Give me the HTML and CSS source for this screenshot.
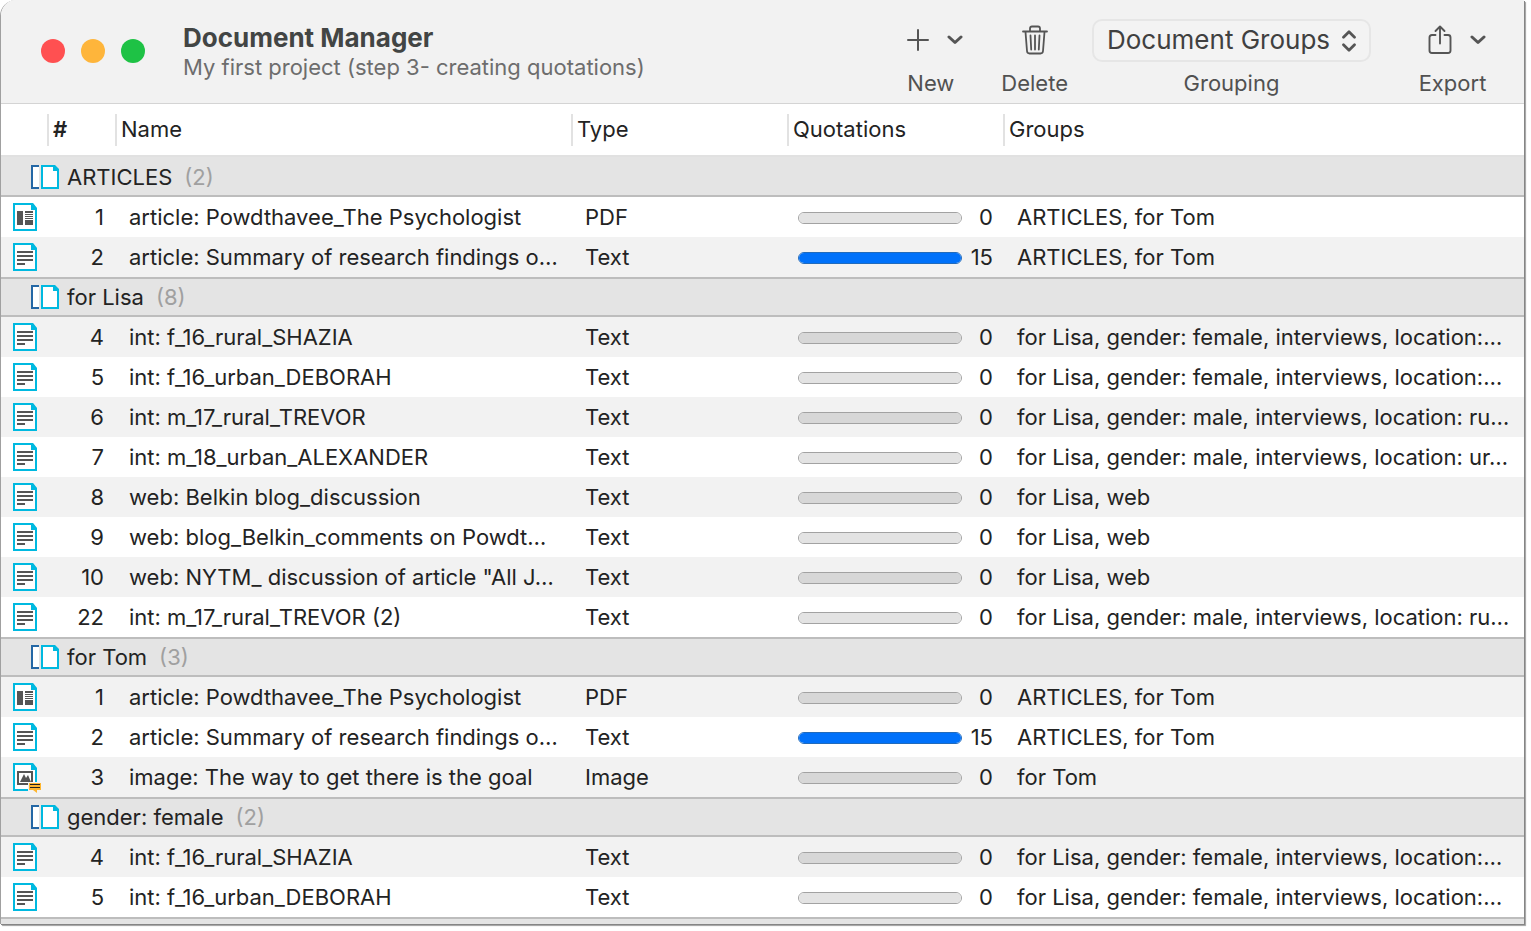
FILE: index.html
```html
<!DOCTYPE html>
<html lang="en">
<head>
<meta charset="utf-8">
<title>Document Manager</title>
<link rel="stylesheet" href="styles.css">
</head>
<body>
<svg class="sprite" aria-hidden="true">
  <symbol id="page" viewBox="0 0 28 28">
    <path d="M1 1H19L23 6V27H1Z" fill="#fff" stroke="#00b9e0" stroke-width="2"/>
    <path d="M18 0H20L24 5V7H18Z" fill="#00b9e0"/>
  </symbol>
  <symbol id="text-doc" viewBox="0 0 28 28">
    <use href="#page" width="28" height="28"/>
    <path d="M4 9H20M4 13H20M4 17H20M4 21H12" stroke="#555" stroke-width="2"/>
  </symbol>
  <symbol id="pdf-doc" viewBox="0 0 28 28">
    <use href="#page" width="28" height="28"/>
    <path d="M4 8H10V22H4ZM12 8H20V10H12ZM12 11H20V12H12ZM12 13H20V14H12ZM12 15H20V16H12ZM12 17H20V22H12Z" fill="#555"/>
  </symbol>
  <symbol id="image-doc" viewBox="0 0 28 28">
    <use href="#page" width="28" height="28"/>
    <path d="M5 9H19V21H5Z" fill="#fff" stroke="#555" stroke-width="2"/>
    <path d="M7 19L11 11L13 15L15 12L18 19Z" fill="#555"/>
    <path d="M15 19H28V28H15Z" fill="#f2f2f2"/>
    <path d="M16 20H28V27H24V30L20 27H16Z" fill="#ffb62e"/>
    <path d="M17 21.500H27M17 24.500H27" stroke="#222" stroke-width="1"/>
  </symbol>
  <symbol id="group" viewBox="0 0 28 24">
    <path d="M2 2H8V22H2Z" fill="#fff"/>
    <path d="M8 1H1V23H8" fill="none" stroke="#2367a5" stroke-width="2"/>
    <path d="M11 1H23L27 6V23H11Z" fill="#fff" stroke="#00b9e0" stroke-width="2"/>
    <path d="M22 0H24L28 4V6H22Z" fill="#00b9e0"/>
  </symbol>
  <symbol id="chevron" viewBox="0 0 16 10">
    <path d="M2 2L8 7.500L14 2" fill="none" stroke="#555" stroke-width="3" stroke-linecap="round" stroke-linejoin="round"/>
  </symbol>
</svg>
<main class="window">
  <header class="titlebar">
    <div class="lights">
      <button class="light close" aria-label="Close"></button>
      <button class="light minimize" aria-label="Minimize"></button>
      <button class="light zoom" aria-label="Zoom"></button>
    </div>
    <div class="titles">
      <h1>Document Manager</h1>
      <p>My first project (step 3- creating quotations)</p>
    </div>
    <div class="toolbar">
      <button class="tool tool-new">
        <span class="glyphs">
          <svg class="plus" viewBox="0 0 22 22"><path d="M11 1V21M1 11H21" fill="none" stroke="#555" stroke-width="2" stroke-linecap="round"/></svg>
          <svg class="chevron"><use href="#chevron"/></svg>
        </span>
        <span>New</span>
      </button>
      <button class="tool tool-delete">
        <span class="glyphs">
          <svg class="trash" viewBox="0 0 26 30"><path d="M1 6.500H25M8 6V3.500Q8 1.500 10 1.500H16Q18 1.500 18 3.500V6M3.500 7L5 26Q5.200 28.500 7.500 28.500H18.500Q20.800 28.500 21 26L22.500 7M8.500 10.500L9.200 24.500M13 10.500V24.500M17.500 10.500L16.800 24.500" fill="none" stroke="#555" stroke-width="1.800" stroke-linecap="round"/></svg>
        </span>
        <span>Delete</span>
      </button>
      <div class="tool tool-grouping">
        <span class="picker">
          <select id="grouping"><option>Document Groups</option></select>
          <svg class="updown" viewBox="0 0 16 24"><path d="M2 8L8 2L14 8M2 16L8 22L14 16" fill="none" stroke="#555" stroke-width="3" stroke-linecap="round" stroke-linejoin="round"/></svg>
        </span>
        <label for="grouping">Grouping</label>
      </div>
      <button class="tool tool-export">
        <span class="glyphs">
          <svg class="share" viewBox="0 0 24 30"><path d="M7.500 10H4Q1.500 10 1.500 12.500V25.500Q1.500 28 4 28H20Q22.500 28 22.500 25.500V12.500Q22.500 10 20 10H16.500M12 18.500V2M7.500 6L12 1.500L16.500 6" fill="none" stroke="#555" stroke-width="1.900" stroke-linecap="round" stroke-linejoin="round"/></svg>
          <svg class="chevron"><use href="#chevron"/></svg>
        </span>
        <span>Export</span>
      </button>
    </div>
  </header>
  <table class="documents">
    <colgroup><col class="col-icon"><col class="col-number"><col class="col-name"><col class="col-type"><col class="col-quotations"><col></colgroup>
    <thead>
      <tr><td></td><th scope="col"><span class="sorted">#</span></th><th scope="col"><span>Name</span></th><th scope="col"><span>Type</span></th><th scope="col"><span>Quotations</span></th><th scope="col"><span>Groups</span></th></tr>
    </thead>
    <tbody class="first">
      <tr class="group"><th colspan="6" scope="rowgroup"><div><svg><use href="#group"/></svg>ARTICLES <span>(2)</span></div></th></tr>
      <tr><td><svg class="doc"><use href="#pdf-doc" width="28" height="28"/></svg></td><td>1</td><td>article: Powdthavee_The Psychologist</td><td>PDF</td><td><div class="count"><progress value="0" max="15" aria-label="Quotations"></progress><span>0</span></div></td><td>ARTICLES, for Tom</td></tr>
      <tr><td><svg class="doc"><use href="#text-doc"/></svg></td><td>2</td><td>article: Summary of research findings o…</td><td>Text</td><td><div class="count"><progress value="15" max="15" aria-label="Quotations"></progress><span>15</span></div></td><td>ARTICLES, for Tom</td></tr>
    </tbody>
    <tbody>
      <tr class="group"><th colspan="6" scope="rowgroup"><div><svg><use href="#group"/></svg>for Lisa <span>(8)</span></div></th></tr>
      <tr><td><svg class="doc"><use href="#text-doc"/></svg></td><td>4</td><td>int: f_16_rural_SHAZIA</td><td>Text</td><td><div class="count"><progress value="0" max="15" aria-label="Quotations"></progress><span>0</span></div></td><td>for Lisa, gender: female, interviews, location:…</td></tr>
      <tr><td><svg class="doc"><use href="#text-doc"/></svg></td><td>5</td><td>int: f_16_urban_DEBORAH</td><td>Text</td><td><div class="count"><progress value="0" max="15" aria-label="Quotations"></progress><span>0</span></div></td><td>for Lisa, gender: female, interviews, location:…</td></tr>
      <tr><td><svg class="doc"><use href="#text-doc"/></svg></td><td>6</td><td>int: m_17_rural_TREVOR</td><td>Text</td><td><div class="count"><progress value="0" max="15" aria-label="Quotations"></progress><span>0</span></div></td><td>for Lisa, gender: male, interviews, location: ru…</td></tr>
      <tr><td><svg class="doc"><use href="#text-doc"/></svg></td><td>7</td><td>int: m_18_urban_ALEXANDER</td><td>Text</td><td><div class="count"><progress value="0" max="15" aria-label="Quotations"></progress><span>0</span></div></td><td>for Lisa, gender: male, interviews, location: ur…</td></tr>
      <tr><td><svg class="doc"><use href="#text-doc"/></svg></td><td>8</td><td>web: Belkin blog_discussion</td><td>Text</td><td><div class="count"><progress value="0" max="15" aria-label="Quotations"></progress><span>0</span></div></td><td>for Lisa, web</td></tr>
      <tr><td><svg class="doc"><use href="#text-doc"/></svg></td><td>9</td><td>web: blog_Belkin_comments on Powdt…</td><td>Text</td><td><div class="count"><progress value="0" max="15" aria-label="Quotations"></progress><span>0</span></div></td><td>for Lisa, web</td></tr>
      <tr><td><svg class="doc"><use href="#text-doc"/></svg></td><td>10</td><td>web: NYTM_ discussion of article "All J…</td><td>Text</td><td><div class="count"><progress value="0" max="15" aria-label="Quotations"></progress><span>0</span></div></td><td>for Lisa, web</td></tr>
      <tr><td><svg class="doc"><use href="#text-doc"/></svg></td><td>22</td><td>int: m_17_rural_TREVOR (2)</td><td>Text</td><td><div class="count"><progress value="0" max="15" aria-label="Quotations"></progress><span>0</span></div></td><td>for Lisa, gender: male, interviews, location: ru…</td></tr>
    </tbody>
    <tbody>
      <tr class="group"><th colspan="6" scope="rowgroup"><div><svg><use href="#group"/></svg>for Tom <span>(3)</span></div></th></tr>
      <tr><td><svg class="doc"><use href="#pdf-doc"/></svg></td><td>1</td><td>article: Powdthavee_The Psychologist</td><td>PDF</td><td><div class="count"><progress value="0" max="15" aria-label="Quotations"></progress><span>0</span></div></td><td>ARTICLES, for Tom</td></tr>
      <tr><td><svg class="doc"><use href="#text-doc"/></svg></td><td>2</td><td>article: Summary of research findings o…</td><td>Text</td><td><div class="count"><progress value="15" max="15" aria-label="Quotations"></progress><span>15</span></div></td><td>ARTICLES, for Tom</td></tr>
      <tr><td><svg class="doc"><use href="#image-doc"/></svg></td><td>3</td><td>image: The way to get there is the goal</td><td>Image</td><td><div class="count"><progress value="0" max="15" aria-label="Quotations"></progress><span>0</span></div></td><td>for Tom</td></tr>
    </tbody>
    <tbody>
      <tr class="group"><th colspan="6" scope="rowgroup"><div><svg><use href="#group"/></svg>gender: female <span>(2)</span></div></th></tr>
      <tr><td><svg class="doc"><use href="#text-doc"/></svg></td><td>4</td><td>int: f_16_rural_SHAZIA</td><td>Text</td><td><div class="count"><progress value="0" max="15" aria-label="Quotations"></progress><span>0</span></div></td><td>for Lisa, gender: female, interviews, location:…</td></tr>
      <tr><td><svg class="doc"><use href="#text-doc"/></svg></td><td>5</td><td>int: f_16_urban_DEBORAH</td><td>Text</td><td><div class="count"><progress value="0" max="15" aria-label="Quotations"></progress><span>0</span></div></td><td>for Lisa, gender: female, interviews, location:…</td></tr>
    </tbody>
  </table>
  <div class="next-group"></div>
</main>
</body>
</html>
```

FILE: styles.css
```css
* { box-sizing: border-box; }
body {
  margin: 0;
  height: 100vh;
  padding: 0 7px 7px 0;
  overflow: hidden;
  background: #fff;
  color: #232323;
  font: 22px/28px Inter, "Liberation Sans", sans-serif;
}
button, select { font: inherit; color: inherit; }
.sprite { position: absolute; width: 0; height: 0; }
symbol { overflow: visible; }
.window {
  display: flex;
  flex-direction: column;
  height: 100%;
  overflow: hidden;
  border-left: 1px solid #a0a0a0;
  border-radius: 16px 0 0 0;
  box-shadow: 1px 1px 0 #858585, 2px 2px 1px #a0a0a0;
  background: #fff;
}
.titlebar {
  display: flex;
  flex: none;
  height: 104px;
  padding-left: 40px;
  background: #f2f2f2;
  border-bottom: 1px solid #d4d4d4;
}
.lights { display: flex; gap: 16px; padding-top: 39px; }
.light { width: 24px; height: 24px; padding: 0; border: 0; border-radius: 50%; }
.close { background: #ff5051; }
.minimize { background: #feb53b; }
.zoom { background: #1ec245; }
.titles { padding: 22px 0 0 38px; white-space: nowrap; }
h1 { margin: 0; font-size: 26px; line-height: 32px; font-weight: 700; color: #424544; }
.titles p { margin: 0; line-height: 26px; color: #6d6d6d; }
.toolbar { display: flex; margin-left: auto; padding: 19px 37px 0 0; color: #515151; }
.tool {
  display: flex;
  flex-direction: column;
  gap: 7px;
  padding: 0;
  border: 0;
  background: none;
  text-align: left;
  align-items: center;
  justify-content: flex-start;
}
.glyphs { display: flex; align-items: center; height: 42px; gap: 18px; }
.tool > span:last-child, .tool label { padding-top: 1px; }
.tool-new { width: 58px; align-items: flex-start; }
.tool-delete { margin: 0 24px 0 36px; }
.tool-export { width: 69px; margin-left: 47px; }
.tool-export .glyphs { padding-left: 8px; }
.plus { width: 22px; height: 22px; }
.chevron { width: 16px; height: 10px; }
.trash { width: 26px; height: 30px; }
.share { width: 24px; height: 30px; }
.picker { display: grid; align-items: center; width: 279px; }
.picker > * { grid-area: 1 / 1; }
.picker select {
  height: 43px;
  padding: 0 36px 2px 13px;
  appearance: none;
  border: 2px solid #e6e6e6;
  border-radius: 10px;
  background: #f3f3f3;
  color: #404040;
  font-size: 26px;
}
.updown { width: 16px; height: 22px; justify-self: end; margin-right: 14px; pointer-events: none; }
.tool-grouping { gap: 6px; }

.documents { flex: none; width: 100%; table-layout: fixed; border-collapse: separate; border-spacing: 0; }
.col-icon { width: 46px; }
.col-number { width: 68px; }
.col-name { width: 456px; }
.col-type, .col-quotations { width: 216px; }
.documents th { font-weight: 400; text-align: left; padding: 0; }
.documents td { height: 40px; padding: 0 0 0 14px; white-space: nowrap; }
thead th, .documents thead td { height: 51px; }
thead th span { display: block; height: 32px; line-height: 30px; padding-left: 4px; border-left: 2px solid #e2e2e2; }
thead .sorted { font-weight: 600; }
.documents tbody td:first-child { padding-left: 12px; }
.documents tbody td:nth-child(2) { padding: 0 11px 0 0; text-align: right; }
.documents tbody td:nth-child(5) { padding: 0 10px 0 11px; }
.doc { display: block; width: 28px; height: 28px; overflow: visible; }
.doc, .group svg { flex: none; }
tbody tr:nth-child(even) { background: #f2f2f2; }
.first tr:nth-child(even) { background: #fff; }
.first tr:nth-child(odd) { background: #f2f2f2; }
.documents .group th {
  height: 40px;
  background: #e4e4e4;
  border: solid #bdbdbd;
  border-width: 2px 0;
}
.documents .first .group th { height: 42px; padding-top: 2px; border-top-color: #e1e1e1; }
.group div { display: flex; align-items: center; padding-left: 30px; }
.group svg { width: 28px; height: 24px; margin-right: 8px; }
.group span { margin-left: 12px; color: #a0a0a0; }
.count { display: flex; align-items: center; justify-content: space-between; }
progress {
  display: block;
  width: 164px;
  height: 12px;
  margin-top: 2px;
  appearance: none;
  border: 1px solid #a2a2a2;
  border-radius: 6px;
  overflow: hidden;
}
progress[value="15"] { border-color: #226bbb; }
progress::-webkit-progress-bar { background: #e3e3e3; }
tr:nth-child(even) progress::-webkit-progress-bar { background: #d7d7d7; }
.first tr:nth-child(even) progress::-webkit-progress-bar { background: #e3e3e3; }
progress::-webkit-progress-value { background: #0071fa; }
.next-group { flex: 1; background: #e4e4e4; border-top: 2px solid #bdbdbd; }
```
